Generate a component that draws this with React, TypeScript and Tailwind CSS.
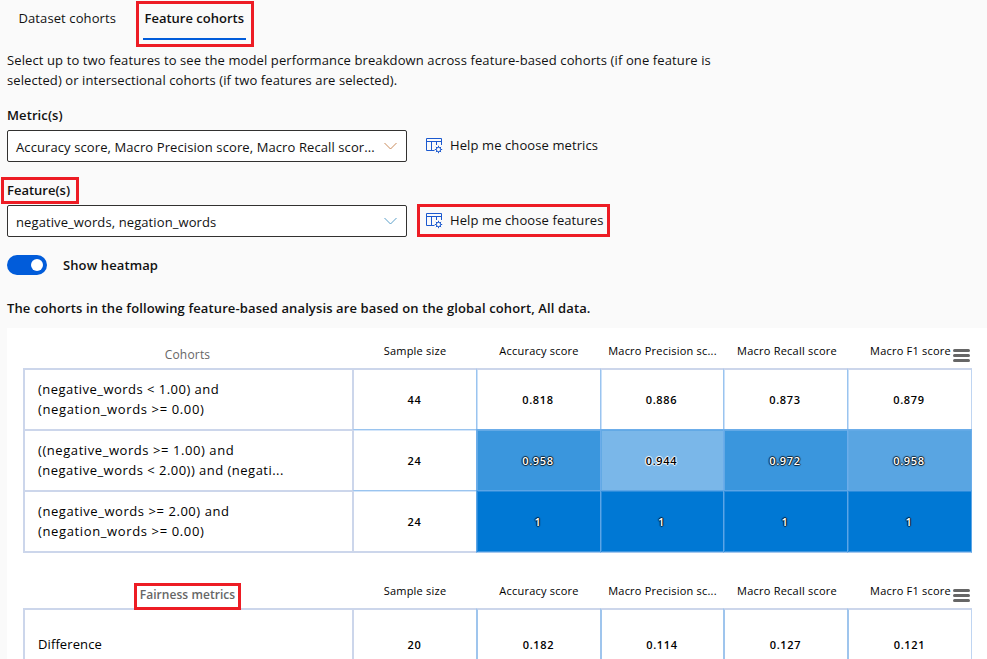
import React from "react";

const heads = ["Sample size", "Accuracy score", "Macro Precision sc...", "Macro Recall score", "Macro F1 score"];

function GridIcon() {
  return (
    <svg width="18" height="18" viewBox="0 0 18 18" fill="none" stroke="#1b59cf" className="shrink-0">
      <path d="M9.5 13.5H1.5V1.5H16.5V8M1 4.5H17M6.5 4.5V13.5M11.5 4.5V8" />
      <circle cx="13.5" cy="12.5" r="2.2" />
      <path d="M13.5 8.8v1.5M13.5 14.7v1.5M9.8 12.5h1.5M15.7 12.5h1.5M10.9 9.9l1.1 1.1M15 14l1.1 1.1M16.1 9.9L15 11M12 14l-1.1 1.1" />
    </svg>
  );
}

function Select({ children, chevron }: { children: React.ReactNode; chevron: string }) {
  return (
    <div className="flex h-8 w-[400px] items-center justify-between rounded-[2px] border border-[#323130] bg-white pr-[9px] pl-2">
      <span className="pt-px whitespace-nowrap">{children}</span>
      <svg width="13" height="8" viewBox="0 0 13 8" fill="none" className={chevron}>
        <path d="M0.5 1L6.5 7L12.5 1" stroke="currentColor" />
      </svg>
    </div>
  );
}

function Help({ children, frame }: { children: React.ReactNode; frame: string }) {
  return (
    <div className={`-mt-px ml-[10px] flex h-[33px] w-[193px] items-center gap-[7px] border-[3px] pl-[5px] whitespace-nowrap ${frame}`}>
      <GridIcon />
      <span className="pb-[2px]">{children}</span>
    </div>
  );
}

function Menu() {
  return (
    <div className="absolute top-[21px] right-0 flex w-[17px] flex-col gap-[2px]">
      <i className="h-[3px] rounded-full bg-[#666]" />
      <i className="h-[3px] rounded-full bg-[#666]" />
      <i className="h-[3px] rounded-full bg-[#666]" />
    </div>
  );
}

function TableHead({ children }: { children: React.ReactNode }) {
  return (
    <div className="relative grid h-10 w-[947px] grid-cols-[329px_124px_124px_123px_124px_123px] grid-rows-[40px] text-black">
      <div className="flex items-center justify-center pt-[14px] text-[12px] tracking-[0.18px] text-[#666]">{children}</div>
      {heads.map((h, i) => (
        <div key={h} className={`flex items-center justify-center pt-[5px] text-[11px] tracking-[0.22px] whitespace-nowrap ${i > 2 ? "pl-1" : "pl-[2px]"}`}>
          {h}
        </div>
      ))}
      <Menu />
    </div>
  );
}

type Row = { name: React.ReactNode; values: string[]; cells: string[]; height: string; pad: string; last?: boolean };

function TableRow({ name, values, cells, height, pad, last }: Row) {
  return (
    <div className={`grid w-[949px] grid-cols-[329px_124px_124px_123px_124px_125px] text-black ${height}`}>
      <div className={`flex items-center border-t-2 border-l-2 border-[#ccd6eb] pb-[2px] pl-[13px] text-[13px] leading-5 whitespace-nowrap ${last ? "border-b-2" : ""}`}>
        <div>{name}</div>
      </div>
      {values.map((v, i) => (
        <div key={i} className={`flex items-center justify-center pr-px text-[11px] font-semibold tracking-[0.7px] ${pad} ${cells[i]}`}>
          {v}
        </div>
      ))}
    </div>
  );
}

const dark = "text-white [text-shadow:1px_0_1px_#000b,-1px_0_1px_#000b,0_1px_1px_#000b,0_-1px_1px_#000b]";
const light = "text-black [text-shadow:1px_0_1px_#fff,-1px_0_1px_#fff,0_1px_1px_#fff,0_-1px_1px_#fff,0_0_1px_#fff]";

const sizeTop = "border-l-2 border-t-2 border-[#ccd6eb]";
const sizeMid = "border-l-2 border-t border-l-[#ccd6eb] border-t-[#9ac4ef] shadow-[inset_0_1px_0_#d4e6fa]";
const sizeEnd = "border-l-2 border-t border-b-2 border-l-[#ccd6eb] border-b-[#ccd6eb] border-t-[#9ac4ef] shadow-[inset_0_1px_0_#d4e6fa]";
const plain = "border-l border-t-2 border-l-[#9ac4ef] border-t-[#ccd6eb] shadow-[inset_1px_0_0_#cbe1f9]";
const plainEnd = "border-r border-r-[#bfd5f2]";
const mid = "border-l border-t border-[#6cadea] shadow-[inset_1px_1px_0_#62a9e5]";
const full = "border-l border-t border-b border-[#5ca5e6] border-b-[#a6c8ee] bg-[#0078d4] shadow-[inset_1px_1px_0_#2b8cdc,inset_0_-1px_0_#3f97e0]";
const pair = "border-l-2 border-t-2 border-l-[#9fc5ed] border-t-[#ccd6eb]";

const rows: Row[] = [
  {
    name: <><div className="tracking-[0.47px]">(negative_words &lt; 1.00) and</div><div className="tracking-[0.63px]">(negation_words &gt;= 0.00)</div></>,
    values: ["44", "0.818", "0.886", "0.873", "0.879"],
    cells: [sizeTop, plain, plain, plain, `${plain} ${plainEnd}`],
    height: "h-[61px]",
    pad: "pt-0",
  },
  {
    name: <><div className="tracking-[0.57px]">((negative_words &gt;= 1.00) and</div><div className="tracking-[0.48px]">(negative_words &lt; 2.00)) and (negati...</div></>,
    values: ["24", "0.958", "0.944", "0.972", "0.958"],
    cells: [
      sizeMid,
      `${mid} bg-[#3a96dd] ${dark}`,
      `${mid} bg-[#7ab7e9] ${light}`,
      `${mid} bg-[#3a96dd] ${dark}`,
      `${mid} border-r bg-[#59a5e2] ${dark}`,
    ],
    height: "h-[61px]",
    pad: "pt-[2px]",
  },
  {
    name: <><div className="tracking-[0.56px]">(negative_words &gt;= 2.00) and</div><div className="tracking-[0.63px]">(negation_words &gt;= 0.00)</div></>,
    values: ["24", "1", "1", "1", "1"],
    cells: [sizeEnd, `${full} ${dark}`, `${full} ${dark}`, `${full} ${dark}`, `${full} border-r ${dark}`],
    height: "h-[63px]",
    pad: "pt-px",
    last: true,
  },
];

export default function App() {
  return (
    <div className="flex h-[659px] w-[987px] flex-col overflow-hidden bg-[#fafafa] pl-[7px] font-['Open_Sans','Noto_Sans',sans-serif] text-[13px] leading-5 tracking-[0.1px] text-[#111]">
      <div className="flex h-[50px] shrink-0">
        <span className="w-[129px] pt-2 pl-[11.5px]">Dataset cohorts</span>
        <div className="mt-px h-[46px] w-[118px] border-[3px] border-[#ed1c24] pt-1 pl-1">
          <div className="h-8 w-[103px] border-b-2 border-[#015cda] pl-[1.5px] font-semibold tracking-normal whitespace-nowrap">Feature cohorts</div>
        </div>
      </div>
      <p className="w-[750px] shrink-0 tracking-[0.112px] whitespace-nowrap">
        Select up to two features to see the model performance breakdown across feature-based cohorts (if one feature is
        <br /><span className="tracking-[0.09px]">selected) or intersectional cohorts (if two features are selected).</span>
      </p>
      <div className="mt-[15px] font-semibold">Metric(s)</div>
      <div className="mt-[5px] flex h-8 shrink-0">
        <Select chevron="text-[#c98a5a]">Accuracy score, Macro Precision score, Macro Recall scor...</Select>
        <Help frame="border-transparent">Help me choose metrics</Help>
      </div>
      <div className="mt-[15px] -ml-[6px] h-[27px] w-[78px] shrink-0 border-[3px] border-[#ed1c24] pl-[3px] font-semibold tracking-normal">Feature(s)</div>
      <div className="mt-px flex h-8 shrink-0">
        <Select chevron="text-[#5a9fc9]">negative_words, negation_words</Select>
        <Help frame="border-[#ed1c24]">Help me choose features</Help>
      </div>
      <div className="mt-[18px] flex h-5 shrink-0 items-center gap-4">
        <div className="flex h-5 w-10 items-center justify-end rounded-full bg-[#015cda] pr-1">
          <i className="size-3 rounded-full bg-white" />
        </div>
        <span className="font-semibold">Show heatmap</span>
      </div>
      <div className="mt-[23px] font-semibold tracking-[0.12px]">The cohorts in the following feature-based analysis are based on the global cohort, All data.</div>
      <div className="mt-[10px] shrink-0 bg-white pl-4">
        <TableHead>Cohorts</TableHead>
        {rows.map((r, i) => <TableRow key={i} {...r} />)}
        <div className="h-[15px]" />
        <TableHead>
          <span className="relative z-10 mt-[3px] flex h-[27px] w-[107px] shrink-0 items-center justify-center border-[3px] border-[#ed1c24] pb-[3px] font-semibold tracking-[0.05px] whitespace-nowrap">Fairness metrics</span>
        </TableHead>
        <TableRow
          name="Difference"
          values={["20", "0.182", "0.114", "0.127", "0.121"]}
          cells={[sizeTop, pair, pair, pair, `${pair} ${plainEnd}`]}
          height="h-[72px]"
          pad="pt-0"
        />
      </div>
    </div>
  );
}
